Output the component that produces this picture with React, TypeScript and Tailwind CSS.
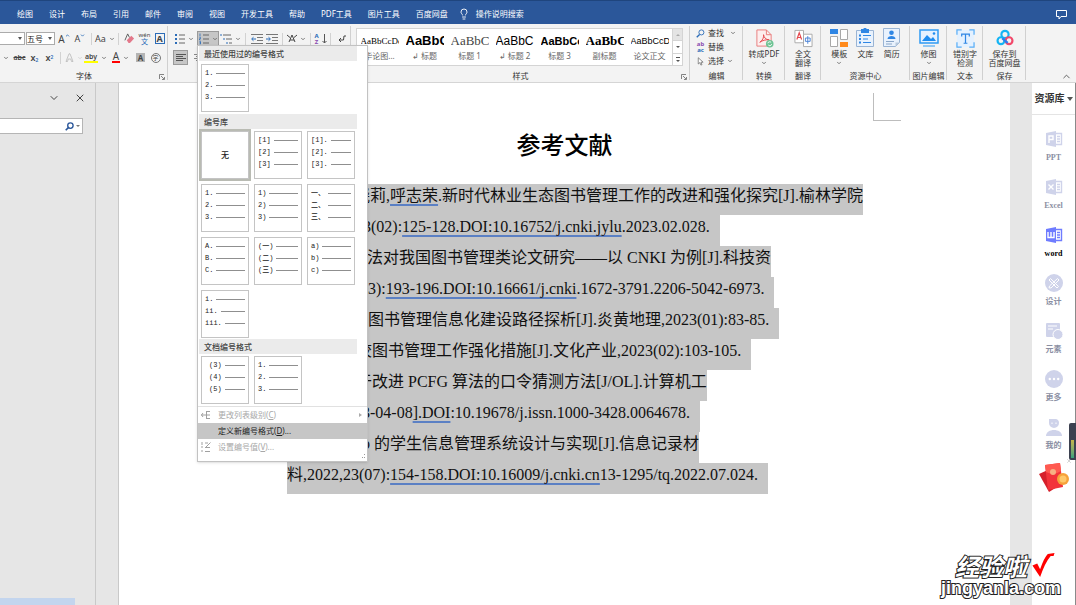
import type { ReactNode } from "react";
import clsx from "clsx";
import { ChevronDown, ChevronUp, Lightbulb, X } from "lucide-react";

const TABS = [
  "绘图",
  "设计",
  "布局",
  "引用",
  "邮件",
  "审阅",
  "视图",
  "开发工具",
  "帮助",
  "PDF工具",
  "图片工具",
  "百度网盘",
];

const STYLES = [
  { sample: "AaBbCcDc", name: "毕论图...", look: "font-['Liberation_Serif'] text-[9px]" },
  { sample: "AaBbC", name: "↲ 标题", look: "font-['Liberation_Sans'] text-[13px] font-bold" },
  { sample: "AaBbC", name: "标题 1", look: "font-['Liberation_Serif'] text-[13px] text-[#444]" },
  { sample: "AaBbC", name: "↲ 标题 2", look: "font-['Liberation_Sans'] text-[12px]" },
  { sample: "AaBbCc", name: "标题 3", look: "font-['Liberation_Sans'] text-[11px] font-bold" },
  { sample: "AaBbC", name: "副标题", look: "font-['Liberation_Serif'] text-[13px] font-bold" },
  { sample: "AaBbCcD", name: "论文正文", look: "font-['Liberation_Sans'] text-[9px]" },
];

type Part = string | { mark: string };
type Line = { pad: string; parts: Part[]; end?: boolean };

const LINES: Line[] = [
  {
    pad: "pl-[67px]",
    parts: ["晓莉,", { mark: "呼志荣" }, ".新时代林业生态图书管理工作的改进和强化探究[J].榆林学院"],
  },
  {
    pad: "pl-[76px]",
    parts: ["3(02):", { mark: "125-128.DOI:10.16752/j.cnki.jylu" }, ".2023.02.028."],
    end: true,
  },
  { pad: "pl-[64px]", parts: ["量法对我国图书管理类论文研究——以 CNKI 为例[J].科技资"] },
  {
    pad: "pl-[73px]",
    parts: ["03):", { mark: "193-196.DOI:10.16661/j.cnki" }, ".1672-3791.2206-5042-6973."],
    end: true,
  },
  { pad: "pl-[81px]", parts: ["图书管理信息化建设路径探析[J].炎黄地理,2023(01):83-85."], end: true },
  { pad: "pl-[69px]", parts: ["校图书管理工作强化措施[J].文化产业,2023(02):103-105."], end: true },
  { pad: "pl-[69px]", parts: ["于改进 PCFG 算法的口令猜测方法[J/OL].计算机工"] },
  {
    pad: "pl-[75px]",
    parts: ["3-04-08", { mark: "].DOI" }, ":10.19678/j.issn.1000-3428.0064678."],
    end: true,
  },
  { pad: "pl-[75px]", parts: ["b 的学生信息管理系统设计与实现[J].信息记录材"] },
  {
    pad: "pl-0",
    parts: ["料,2022,23(07):", { mark: "154-158.DOI:10.16009/j.cnki.cn" }, "13-1295/tq.2022.07.024."],
    end: true,
  },
];

const LIBRARY = [
  ["[1]", "[2]", "[3]"],
  ["[1].", "[2].", "[3]."],
  ["1.", "2.", "3."],
  ["1)", "2)", "3)"],
  ["一、", "二、", "三、"],
  ["A.", "B.", "C."],
  ["(一)", "(二)", "(三)"],
  ["a)", "b)", "c)"],
  ["i.", "ii.", "iii."],
];

function Caret() {
  return <ChevronDown className="h-[6px] w-[6px] shrink-0 text-[#555]" strokeWidth={3} />;
}

function Sep() {
  return <span className="mx-[3px] h-3 w-px shrink-0 bg-[#d2d2d2]" />;
}

function Tool({ label, w = "w-[15px]", on, children }: { label: string; w?: string; on?: boolean; children: ReactNode }) {
  return (
    <button
      type="button"
      aria-label={label}
      className={clsx(
        "flex h-[15px] shrink-0 items-center justify-center gap-[3px] leading-none",
        w,
        on && "border border-[#9a9a9a] bg-[#c6c6c6]"
      )}
    >
      {children}
    </button>
  );
}

function Group({ label, w, launcher, children }: { label: string; w: string; launcher?: boolean; children?: ReactNode }) {
  return (
    <section className={clsx("relative flex shrink-0 flex-col", w)}>
      <div className="h-[46px]">{children}</div>
      <h2 className="text-center text-[8px] leading-3 whitespace-nowrap text-[#333]">{label}</h2>
      {launcher && (
        <svg viewBox="0 0 6 6" className="absolute right-[3px] bottom-[2px] h-[6px] w-[6px]" fill="none" stroke="#666">
          <path d="M.5 5V.5H5M2 2l3 3M5.5 3v2.5H3" strokeWidth=".8" />
        </svg>
      )}
      <span className="absolute top-[2px] right-0 bottom-[2px] w-px bg-[#d0d0d0]" />
    </section>
  );
}

function BigButton({ icon, lines, caret }: { icon: ReactNode; lines: string[]; caret?: boolean }) {
  return (
    <button type="button" className="flex flex-1 flex-col items-center pt-[4px] text-[8px] leading-[9px] whitespace-nowrap text-[#333]">
      <span className="mb-[1px] flex h-5 items-center">{icon}</span>
      {lines.map((l) => (
        <span key={l}>{l}</span>
      ))}
      {caret && (
        <span className="flex h-[9px] items-center">
          <Caret />
        </span>
      )}
    </button>
  );
}

function BulletIcon({ kind }: { kind: "dot" | "num" | "multi" }) {
  if (kind === "multi") {
    return (
      <svg viewBox="0 0 12 12" className="h-[12px] w-[12px]" fill="none">
        <path d="M1 1v2M4 5v2M7 9v2" stroke="#2b6cb8" />
        <path d="M3 2h8M6 6h6M9 10h3" stroke="#666" />
      </svg>
    );
  }
  return (
    <svg viewBox="0 0 10 12" className="h-[12px] w-[10px]" fill="none">
      <path d="M4 2h6M4 6h6M4 10h6" stroke="#666" />
      {kind === "dot" ? (
        <path d="M0 1h2v2H0zM0 5h2v2H0zM0 9h2v2H0z" fill="#2b6cb8" />
      ) : (
        <path d="M1 .5v3M.5 4.5h1v1.2H.5V7h1M.5 8.5h1V11h-1M.5 9.7h1" stroke="#2b6cb8" strokeWidth=".8" />
      )}
    </svg>
  );
}

function IndentIcon({ flip }: { flip?: boolean }) {
  return (
    <svg viewBox="0 0 12 10" className="h-[10px] w-[12px]" fill="none">
      <path d="M0 .5h12M6 3.5h6M6 6.5h6M0 9.5h12" stroke="#777" />
      <path d={flip ? "M0 5h4M2.5 3.2L4.4 5 2.5 6.8" : "M1 5h4M2.5 3.2L.6 5l1.9 1.8"} stroke="#2b6cb8" />
    </svg>
  );
}

function FontGroup() {
  return (
    <Group label="字体" w="w-[168px]" launcher>
      <div className="flex items-center pt-[5px] text-[#444]">
        <div className="flex h-[19px] items-center">
          <button type="button" aria-label="字体名称" className="flex h-[13px] w-[25px] items-center justify-end border border-l-0 border-[#ababab] bg-white pr-[2px]">
            <svg viewBox="0 0 4 3" className="h-[3px] w-[4px]" fill="#555">
              <path d="M0 0h4L2 3z" />
            </svg>
          </button>
          <label className="relative ml-[1px] flex h-[13px] w-[29px] items-center border border-[#ababab] bg-white">
            <select aria-label="字号" className="w-full appearance-none text-[8px] leading-[11px] text-[#222] outline-none">
              <option>五号</option>
            </select>
            <svg viewBox="0 0 4 3" className="pointer-events-none absolute right-[2px] h-[3px] w-[4px]" fill="#555">
              <path d="M0 0h4L2 3z" />
            </svg>
          </label>
          <Tool label="增大字号" w="ml-[1px] w-4">
            <span className="text-[10px]">A</span>
            <ChevronUp className="mb-[6px] -ml-[3px] h-[5px] w-[5px] text-[#2b6cb8]" strokeWidth={4} />
          </Tool>
          <Tool label="减小字号" w="w-4">
            <span className="text-[9px]">A</span>
            <ChevronDown className="mb-[6px] -ml-[3px] h-[5px] w-[5px] text-[#2b6cb8]" strokeWidth={4} />
          </Tool>
          <Sep />
          <Tool label="更改大小写" w="w-[20px]">
            <span className="text-[9px]">Aa</span>
            <Caret />
          </Tool>
          <Sep />
          <Tool label="清除格式">
            <svg viewBox="0 0 12 12" className="h-[11px] w-[11px]">
              <path d="M1 8L4 1l2 4" fill="none" stroke="#555" />
              <path d="M3 8l5-5 3 3-4.5 5H5z" fill="#e3788a" />
            </svg>
          </Tool>
          <Tool label="拼音指南">
            <span className="flex flex-col items-center">
              <span className="text-[6px] leading-[5px]">wén</span>
              <span className="text-[7px] leading-[7px] text-[#2b6cb8]">文</span>
            </span>
          </Tool>
          <Tool label="字符边框">
            <span className="flex h-[11px] w-[10px] items-center justify-center border border-[#2b6cb8] text-[9px] font-bold">A</span>
          </Tool>
        </div>
      </div>
      <div className="flex h-[19px] items-center text-[#444]">
        <Tool label="下划线选项" w="w-[12px]">
          <Caret />
        </Tool>
        <Tool label="删除线">
          <s className="text-[7px] font-semibold">abc</s>
        </Tool>
        <Tool label="下标">
          <span className="text-[9px] font-semibold">
            x<sub className="text-[5px] text-[#2b6cb8]">2</sub>
          </span>
        </Tool>
        <Tool label="上标">
          <span className="text-[9px] font-semibold">
            x<sup className="text-[5px] text-[#2b6cb8]">2</sup>
          </span>
        </Tool>
        <Sep />
        <Tool label="文本效果" w="w-[19px]">
          <svg viewBox="0 0 9 9" className="h-[9px] w-[9px]" fill="none" stroke="#b9b9b9">
            <path d="M1 8.5L4 .8h1l3 7.7H6.5L5.8 6H3.2l-.7 2.5z" strokeWidth=".8" />
          </svg>
          <ChevronDown className="h-[6px] w-[6px] text-[#bbb]" />
        </Tool>
        <Tool label="突出显示" w="w-[25px]">
          <span className="border-b-2 border-[#ffff00] px-px text-[7px] leading-[8px] font-semibold">aby</span>
          <Caret />
        </Tool>
        <Tool label="字体颜色" w="w-[25px]">
          <span className="border-b-2 border-[#ff0000] px-px text-[10px] leading-[9px]">A</span>
          <Caret />
        </Tool>
        <Tool label="字符底纹">
          <span className="flex h-[9px] w-[9px] items-center justify-center bg-[#b4b4b4] text-[8px] font-bold">A</span>
        </Tool>
        <Tool label="带圈字符">
          <span className="flex h-[10px] w-[10px] items-center justify-center rounded-full border border-[#777] text-[6px]">字</span>
        </Tool>
      </div>
    </Group>
  );
}

function ParagraphGroup() {
  return (
    <Group label="" w="w-[183px]">
      <div className="pt-[5px]">
        <div className="flex h-[19px] items-center pl-[4px]">
          <Tool label="项目符号" w="w-[25px]">
            <BulletIcon kind="dot" />
            <Caret />
          </Tool>
          <Tool label="编号" w="w-[22px]" on>
            <BulletIcon kind="num" />
            <Caret />
          </Tool>
          <Tool label="多级列表" w="w-[23px]">
            <BulletIcon kind="multi" />
            <Caret />
          </Tool>
          <Sep />
          <Tool label="减少缩进量">
            <IndentIcon />
          </Tool>
          <Tool label="增加缩进量">
            <IndentIcon flip />
          </Tool>
          <Sep />
          <Tool label="中文版式" w="w-[21px]">
            <svg viewBox="0 0 10 9" className="h-[9px] w-[10px]" fill="none" stroke="#444">
              <path d="M2 8l3-7 3 7M3 6h4M0 1l3 2.5M10 1L7 3.5" />
            </svg>
            <Caret />
          </Tool>
          <Sep />
          <Tool label="排序" w="w-[13px]">
            <span className="flex flex-col text-[6px] leading-[6px] font-bold">
              <span className="text-[#2b6cb8]">A</span>
              <span className="text-[#8a4bb0]">Z</span>
            </span>
            <svg viewBox="0 0 5 10" className="h-[10px] w-[5px]" fill="none" stroke="#555">
              <path d="M2.5 0v9M.5 7l2 2 2-2" />
            </svg>
          </Tool>
          <Sep />
          <Tool label="显示编辑标记">
            <svg viewBox="0 0 8 8" className="h-[8px] w-[8px]" fill="none" stroke="#444">
              <path d="M7 0v2M6 1l-.5 4H1M3 3L1 5l2 2" />
            </svg>
          </Tool>
        </div>
        <div className="flex h-[19px] items-center gap-[3px] pl-[5px]">
          <Tool label="左对齐" on>
            <svg viewBox="0 0 10 10" className="h-[10px] w-[10px]" stroke="#555">
              <path d="M0 1.5h10M0 3.5h7M0 5.5h10M0 7.5h7" />
            </svg>
          </Tool>
          <Tool label="居中">
            <svg viewBox="0 0 10 10" className="h-[10px] w-[10px]" stroke="#888">
              <path d="M0 1.5h10M2 3.5h6M0 5.5h10M2 7.5h6" />
            </svg>
          </Tool>
        </div>
      </div>
    </Group>
  );
}

function StylesGroup() {
  return (
    <Group label="样式" w="w-[339px]" launcher>
      <div className="pt-[4px] pl-[5px]">
        <div className="flex h-[38px] w-[327px] border border-[#d4d4d4] bg-white">
          {STYLES.map((s) => (
            <button key={s.name} type="button" className="flex w-[45px] shrink-0 flex-col items-center pt-[4px] text-black">
              <span className={clsx("h-4 w-[38px] overflow-hidden text-left leading-4 whitespace-nowrap", s.look)}>{s.sample}</span>
              <span className="mt-[2px] text-[8px] leading-[10px] whitespace-nowrap text-[#666]">{s.name}</span>
            </button>
          ))}
          <div className="flex flex-1 flex-col divide-y divide-[#d4d4d4] border-l border-[#d4d4d4]">
            <button type="button" aria-label="上一行" className="flex flex-1 items-center justify-center bg-[#e4e4e4]">
              <svg viewBox="0 0 4 2" className="h-[2px] w-[4px]" fill="#aaa">
                <path d="M0 2h4L2 0z" />
              </svg>
            </button>
            <button type="button" aria-label="下一行" className="flex flex-1 items-center justify-center">
              <svg viewBox="0 0 4 2" className="h-[2px] w-[4px]" fill="#555">
                <path d="M0 0h4L2 2z" />
              </svg>
            </button>
            <button type="button" aria-label="其他" className="flex flex-1 items-center justify-center">
              <svg viewBox="0 0 4 5" className="h-[5px] w-[4px]" fill="#555">
                <path d="M0 0h4v1H0zM0 3h4L2 5z" />
              </svg>
            </button>
          </div>
        </div>
      </div>
    </Group>
  );
}

function EditGroup() {
  return (
    <Group label="编辑" w="w-[53px]">
      <div className="flex flex-col pt-[2px] pl-[6px] text-[8px] leading-[14px] text-[#333]">
        <button type="button" className="flex h-[14px] items-center gap-[3px]">
          <svg viewBox="0 0 10 10" className="h-[9px] w-[9px]" fill="none" stroke="#2b6cb8">
            <circle cx="6" cy="3.8" r="2.8" />
            <path d="M4 6L.8 9.2" strokeWidth="1.5" />
          </svg>
          查找
          <span className="ml-[3px]">
            <Caret />
          </span>
        </button>
        <button type="button" className="flex h-[14px] items-center gap-[3px]">
          <span className="flex w-[9px] flex-col text-[6px] leading-[6px] font-bold">
            <span className="text-[#8a4bb0]">ab</span>
            <span className="text-[#2b6cb8]">ac</span>
          </span>
          替换
        </button>
        <button type="button" className="flex h-[14px] items-center gap-[3px]">
          <svg viewBox="0 0 9 10" className="h-[9px] w-[9px]" fill="#fff" stroke="#666">
            <path d="M2 .8v7l1.8-1.6L5 9l1.2-.6L5 5.800h2.400z" strokeWidth=".8" />
          </svg>
          选择
          <Caret />
        </button>
      </div>
    </Group>
  );
}

const pdfIcon = (
  <svg viewBox="0 0 20 20" className="h-[19px] w-[19px]" fill="none">
    <path d="M2 1h10l5 5v12H2z" fill="#fdeeee" stroke="#e87b7b" />
    <path d="M12 1v5h5" stroke="#e87b7b" />
    <path d="M5 14c3-2 4.500-5 4-8 .5 3 2 5 6 5.500C11 11 8 12 5 14z" stroke="#e5484d" />
    <circle cx="15.5" cy="15.5" r="4" fill="#6fc495" />
    <path d="M13.500 15a2 2 0 013.500-.8M17.500 16a2 2 0 01-3.500.8" stroke="#fff" />
  </svg>
);

const translateIcon = (
  <svg viewBox="0 0 20 20" className="h-[19px] w-[19px]" fill="none">
    <path d="M1 1.5h9v13H1z" fill="#fff" stroke="#aaa" />
    <path d="M10 5.5h9v13h-9z" fill="#fff" stroke="#aaa" />
    <path d="M3 11l2.5-7L8 11M3.800 9h3.400" stroke="#e5484d" strokeWidth="1.200" />
    <path d="M14.5 7.5v8M12 9.5h5v3.500h-5z" stroke="#4b83d6" />
  </svg>
);

const templateIcon = (
  <svg viewBox="0 0 20 20" className="h-[20px] w-[20px]" fill="#fff">
    <path d="M1 1h8v5H1z" fill="#2f86e4" />
    <path d="M1.5 8.5h7v10h-7zM11.5 1.5h7v10h-7z" stroke="#a8a8a8" />
    <path d="M11 14h8v5h-8z" fill="#ff8a1c" />
  </svg>
);

const libraryIcon = (
  <svg viewBox="0 0 20 20" className="h-[20px] w-[20px]" fill="none">
    <path d="M1.5 2.5h17v16h-17z" fill="#e9f2fd" stroke="#9ab4d4" />
    <path d="M6 1h2.5a1.5 1.5 0 013 0H14v4H6z" fill="#2f86e4" />
    <path d="M4 7.5h2M4 11h2M4 14.5h2" stroke="#2f86e4" strokeWidth="2" />
    <path d="M8 7.5h8M8 11h5M8 14.5h8" stroke="#2f86e4" />
  </svg>
);

const resumeIcon = (
  <svg viewBox="0 0 20 20" className="h-[20px] w-[20px]" fill="none">
    <path d="M1.5.5h16v14l-4 4h-12z" fill="#e9f2fd" stroke="#9ab4d4" />
    <path d="M17.5 14.5h-4v4z" fill="#b8c9de" />
    <circle cx="9.5" cy="4.8" r="2.3" fill="#2f86e4" />
    <path d="M5.5 11c0-4 8-4 8 0z" fill="#2f86e4" />
    <path d="M4 13.5h8M4 16h6" stroke="#8aa6c8" />
  </svg>
);

const retouchIcon = (
  <svg viewBox="0 0 20 20" className="h-[20px] w-[20px]" fill="none">
    <path d="M1 2h18v13H1z" fill="#e4f1ff" stroke="#2f9bf4" strokeWidth="1.5" />
    <path d="M3 13l5-6 4 4 2-2 3 4z" fill="#1d8cf0" />
    <circle cx="15" cy="5.5" r="1.3" fill="#1d8cf0" />
    <path d="M4 18h12" stroke="#2f9bf4" />
  </svg>
);

const typoIcon = (
  <svg viewBox="0 0 20 20" className="h-[19px] w-[19px]" fill="none">
    <rect x="1" y="1" width="18" height="18" rx="2" fill="#e4f1ff" />
    <path d="M1 6V1h5M14 1h5v5M19 14v5h-5M6 19H1v-5" stroke="#58aef8" strokeWidth="1.3" />
    <path d="M6 8V5.500h8V8M10 5.500V15M8 15h4" stroke="#2f86e4" strokeWidth="1.3" />
  </svg>
);

const netdiskIcon = (
  <svg viewBox="0 0 20 20" className="h-[18px] w-[18px]" fill="none" strokeWidth="2.4">
    <circle cx="10" cy="6" r="4" stroke="#14b4f4" />
    <circle cx="5.5" cy="13" r="3.8" stroke="#14b4f4" />
    <circle cx="14.5" cy="13" r="3.8" stroke="#f2486a" />
    <path d="M7 10.5l6 5" stroke="#2a7df0" />
  </svg>
);

function Ribbon() {
  return (
    <div className="flex h-[59px] border-b border-[#d5d5d5] bg-[#f3f3f3]">
      <FontGroup />
      <ParagraphGroup />
      <StylesGroup />
      <EditGroup />
      <Group label="转换" w="w-[42px]">
        <div className="flex">
          <BigButton icon={pdfIcon} lines={["转成PDF"]} caret />
        </div>
      </Group>
      <Group label="翻译" w="w-[36px]">
        <div className="flex">
          <BigButton icon={translateIcon} lines={["全文", "翻译"]} />
        </div>
      </Group>
      <Group label="资源中心" w="w-[89px]">
        <div className="flex px-[5px]">
          <BigButton icon={templateIcon} lines={["模板"]} caret />
          <BigButton icon={libraryIcon} lines={["文库"]} />
          <BigButton icon={resumeIcon} lines={["简历"]} />
        </div>
      </Group>
      <Group label="图片编辑" w="w-[37px]">
        <div className="flex">
          <BigButton icon={retouchIcon} lines={["修图"]} caret />
        </div>
      </Group>
      <Group label="文本" w="w-[36px]">
        <div className="flex">
          <BigButton icon={typoIcon} lines={["错别字", "检测"]} />
        </div>
      </Group>
      <Group label="保存" w="w-[43px]">
        <div className="flex">
          <BigButton icon={netdiskIcon} lines={["保存到", "百度网盘"]} />
        </div>
      </Group>
      <div className="flex flex-1 items-end justify-end pr-[4px]">
        <button type="button" aria-label="折叠功能区">
          <ChevronUp className="h-[11px] w-[11px] text-[#555]" />
        </button>
      </div>
    </div>
  );
}

function FormatCell({ items, indent }: { items: string[]; indent?: boolean }) {
  return (
    <button
      type="button"
      className={clsx("flex h-12 w-12 flex-col border border-[#c4c4c4] bg-white pt-[2px] pr-[3px]", indent ? "pl-[7px]" : "pl-[3px]")}
    >
      {items.map((t) => (
        <span key={t} className="flex h-3 w-full items-center gap-[3px] font-['Liberation_Mono','Noto_Sans_CJK_SC',monospace] text-[7px] leading-3 font-medium text-[#222]">
          <span className="min-w-[7px] text-left whitespace-nowrap">{t}</span>
          <span className="h-px flex-1 bg-[#8f8f8f]" />
        </span>
      ))}
    </button>
  );
}

function MenuHeading({ children }: { children: ReactNode }) {
  return <h3 className="mr-[10px] ml-[1px] h-[15px] bg-[#ebebeb] pl-[5px] text-[8px] leading-[15px] font-medium text-[#444]">{children}</h3>;
}

function NumberingMenu() {
  return (
    <div className="absolute top-[45px] left-[197px] z-10 w-[171px] border border-[#c2c2c2] bg-white shadow-sm">
      <MenuHeading>最近使用过的编号格式</MenuHeading>
      <div className="px-[3px] pt-[3px] pb-[2px]">
        <FormatCell items={["1.", "2.", "3."]} />
      </div>
      <MenuHeading>编号库</MenuHeading>
      <div className="flex flex-wrap gap-[5px] px-[3px] pt-[2px] pb-[1px]">
        <button type="button" className="h-12 w-12 border border-[#c4c4c4] bg-white text-[8px] font-medium text-[#222] outline-2 outline-[#b9bbb3]">
          无
        </button>
        {LIBRARY.map((items) => (
          <FormatCell key={items[0]} items={items} />
        ))}
      </div>
      <MenuHeading>文档编号格式</MenuHeading>
      <div className="flex gap-[5px] px-[3px] pt-[2px] pb-[2px]">
        <FormatCell items={["(3)", "(4)", "(5)"]} indent />
        <FormatCell items={["1.", "2.", "3."]} />
      </div>
      <div className="border-t border-[#e1e1e1] pb-[6px] text-[8px] leading-4 text-[#a8a8a8]">
        <button type="button" disabled className="flex h-4 w-full items-center pr-[5px] pl-[3px]">
          <svg viewBox="0 0 10 8" className="mr-[7px] h-[8px] w-[10px]" fill="none" stroke="#a0a0a0">
            <path d="M0 4h6M2 2L.5 4 2 6M5 .5h4M6 4h3M5 7.500h4M5.500 0v8" />
          </svg>
          <span>
            更改列表级别(<u>C</u>)
          </span>
          <svg viewBox="0 0 3 4" className="ml-auto h-[4px] w-[3px]" fill="#aaa">
            <path d="M0 0v4l3-2z" />
          </svg>
        </button>
        <button type="button" className="flex h-4 w-full items-center bg-[#c6c6c6] pl-[20px] text-[#222]">
          <span>
            定义新编号格式(<u>D</u>)...
          </span>
        </button>
        <button type="button" disabled className="flex h-4 w-full items-center pl-[3px]">
          <svg viewBox="0 0 10 10" className="mr-[7px] h-[10px] w-[10px]" fill="none" stroke="#a0a0a0">
            <path d="M1 0v3M1 4v2M1 8v2M4 9.500h5M4 5.500h5M9.500.5L4 6M4 1h3" />
          </svg>
          <span>
            设置编号值(<u>V</u>)...
          </span>
        </button>
      </div>
      <svg viewBox="0 0 5 5" className="absolute right-[2px] bottom-[2px] h-[5px] w-[5px]" fill="#999">
        <path d="M4 0h1v1H4zM2 3h1v1H2zM4 3h1v1H4z" />
      </svg>
    </div>
  );
}

function NavPane() {
  return (
    <aside className="flex w-24 shrink-0 flex-col justify-between border-r border-[#c9c9c9] bg-[#e6e6e6]">
      <div>
        <div className="flex items-center justify-end gap-[14px] pt-[9px] pr-[9px] text-[#444]">
          <button type="button" aria-label="任务窗格选项">
            <ChevronDown className="h-[12px] w-[12px]" strokeWidth={2} />
          </button>
          <button type="button" aria-label="关闭">
            <X className="h-[12px] w-[12px]" strokeWidth={2} />
          </button>
        </div>
        <label className="mt-[14px] mr-[12px] flex h-4 items-center border border-l-0 border-[#b5b5b5] bg-white pr-[2px]">
          <input aria-label="在文档中搜索" className="w-0 flex-1 bg-transparent text-[8px] outline-none" />
          <svg viewBox="0 0 10 10" className="h-[9px] w-[9px]" fill="none" stroke="#2b579a">
            <circle cx="6" cy="4" r="3" strokeWidth="1.5" />
            <path d="M4 6L.8 9.2" strokeWidth="1.8" />
          </svg>
          <svg viewBox="0 0 4 2" className="ml-[2px] h-[2px] w-[4px]" fill="#777">
            <path d="M0 0h4L2 2z" />
          </svg>
        </label>
      </div>
      <div className="h-[7px] w-[75px] bg-[#c3d5ee]" />
    </aside>
  );
}

function DocumentPage() {
  return (
    <main className="min-w-0 flex-1 overflow-hidden border-l border-[#c9c9c9] bg-white">
      <div className="flex justify-end pt-[10px] pr-[109px]">
        <div className="h-7 w-7 border-b border-l border-[#bdbdbd]" />
      </div>
      <h1 className="mt-[7px] text-center font-['Noto_Sans_CJK_SC',sans-serif] text-2xl leading-8 font-medium text-black">参考文献</h1>
      <div className="mt-[24px] pl-[168px] font-['Liberation_Serif','Noto_Sans_CJK_SC',serif] text-base text-[#111]">
        {LINES.map((line, i) => (
          <p
            key={i}
            className={clsx("h-[31px] w-fit bg-[#c6c6c6] leading-6 whitespace-nowrap", line.pad, line.end && "pr-[10px]")}
          >
            {line.parts.map((part, j) =>
              typeof part === "string" ? (
                <span key={j}>{part}</span>
              ) : (
                <span key={j} className="underline decoration-[#5b80c4] decoration-2 underline-offset-3 [text-decoration-skip-ink:none]">
                  {part.mark}
                </span>
              )
            )}
          </p>
        ))}
      </div>
    </main>
  );
}

function OfficeIcon({ glyph, active }: { glyph: string; active?: boolean }) {
  const color = active ? "#6f7cff" : "#cfd3ea";
  return (
    <svg viewBox="0 0 18 18" className="h-[18px] w-[18px]" fill="none">
      <path d="M1 3l10-2v16L1 15z" fill={color} />
      <path d="M11 3.500h5.500v11H11M12 6.500h3M12 9h3M12 11.500h3" stroke={color} strokeWidth="1.4" />
      <path d={glyph} stroke="#fff" strokeWidth="1.4" />
    </svg>
  );
}

const SIDE_ITEMS: { name: string; icon: ReactNode; active?: boolean }[] = [
  { name: "PPT", icon: <OfficeIcon glyph="M4 13V6h4v3.500H4" /> },
  { name: "Excel", icon: <OfficeIcon glyph="M3.500 6.500l5 5M8.500 6.500l-5 5" /> },
  { name: "word", icon: <OfficeIcon glyph="M3 6v5.500h6V6M6 6v5.500" active />, active: true },
  {
    name: "设计",
    icon: (
      <svg viewBox="0 0 18 18" className="h-[18px] w-[18px]" fill="none">
        <circle cx="9" cy="9" r="9" fill="#cfd3ea" />
        <path d="M5.500 4.500l8 8-1.500 1.500-8-8zM12.500 4.500l1.500 1.500-8 8-2-.2.500-1.800z" stroke="#fff" />
      </svg>
    ),
  },
  {
    name: "元素",
    icon: (
      <svg viewBox="0 0 18 18" className="h-[18px] w-[18px]" fill="#cfd3ea">
        <rect x="1" y="1" width="14" height="14" rx="1" />
        <path d="M3 4h9M3 7h5" stroke="#fff" />
        <circle cx="13" cy="12.5" r="5" stroke="#fff" />
      </svg>
    ),
  },
  {
    name: "更多",
    icon: (
      <svg viewBox="0 0 18 18" className="h-[18px] w-[18px]" fill="#fff">
        <circle cx="9" cy="9" r="9" fill="#cfd3ea" />
        <circle cx="4.8" cy="9" r="1.2" />
        <circle cx="9" cy="9" r="1.2" />
        <circle cx="13.2" cy="9" r="1.2" />
      </svg>
    ),
  },
  {
    name: "我的",
    icon: (
      <svg viewBox="0 0 18 18" className="h-[18px] w-[18px]" fill="#cfd3ea">
        <path d="M4 1h7a4 4 0 013 4 5 5 0 01-10 0z" />
        <path d="M1 18c0-8 16-8 16 0z" />
        <path d="M7 4.500v1.500M11 4.500v1.500" stroke="#fff" />
      </svg>
    ),
  },
];

function ResourcePanel() {
  return (
    <aside className="relative w-[44px] shrink-0 border-r border-[#8a8a8a] bg-white font-['Liberation_Serif','Noto_Sans_CJK_SC',serif]">
      <button type="button" className="flex h-8 w-full items-center justify-center gap-[2px] border-b border-[#e4e4e4] text-[10px] font-bold whitespace-nowrap text-[#333]">
        资源库
        <svg viewBox="0 0 6 4" className="h-[4px] w-[6px]" fill="#555">
          <path d="M0 0h6L3 4z" />
        </svg>
      </button>
      <nav className="pt-[15px]">
        {SIDE_ITEMS.map((item) => (
          <button
            key={item.name}
            type="button"
            className={clsx(
              "flex h-12 w-full flex-col items-center text-[8px] leading-3 font-bold",
              item.active ? "text-black" : "text-[#8b8fa3]"
            )}
          >
            {item.icon}
            <span className="mt-[4px]">{item.name}</span>
          </button>
        ))}
      </nav>
      <button type="button" aria-label="领取红包" className="absolute top-[379px] left-[6px]">
        <svg viewBox="0 0 32 32" className="h-8 w-8">
          <path d="M1 12l11-5 7 18-8 5z" fill="#d5202b" />
          <path d="M7 3l15-2 3 24-15 3z" fill="#f2333a" />
          <path d="M7 3l15-2 1 8q-7 5-15 1z" fill="#ff5a50" />
          <circle cx="15" cy="10" r="3" fill="#f7b183" />
          <circle cx="25" cy="17" r="6" fill="#f6a23a" />
          <circle cx="25" cy="17" r="3.5" fill="#ffc86a" />
        </svg>
      </button>
      <button type="button" aria-label="关闭红包" className="absolute top-[375px] right-[3px]">
        <X className="h-[6px] w-[6px] text-[#aaa]" />
      </button>
      <div className="absolute top-[340px] -right-px flex h-[37px] w-[7px] items-end rounded-l-[2px] bg-[#3c4150] p-[2px]">
        <span className="h-[18px] w-[3px] bg-gradient-to-b from-[#c4b44a] to-[#35a07a]" />
      </div>
    </aside>
  );
}

function Watermark() {
  return (
    <div className="pointer-events-none absolute right-[15px] bottom-[7px] z-20 flex flex-col items-end font-bold text-white [-webkit-text-stroke:2px_#222] [paint-order:stroke_fill]">
      <div className="flex items-center gap-[4px] pr-[6px]">
        <span className="font-['Noto_Sans_CJK_SC',sans-serif] text-2xl leading-6 italic">经验啦</span>
        <svg viewBox="0 0 24 26" className="h-[25px] w-[24px]">
          <path d="M1 13l5-2 3 6Q13 5 17 1l7-1-1 3h-3Q14 10 9 25z" fill="#ff0000" />
        </svg>
      </div>
      <span className="font-['Liberation_Sans',sans-serif] text-lg leading-5">jingyanla.com</span>
    </div>
  );
}

export default function App() {
  return (
    <div className="relative flex min-h-screen flex-col overflow-hidden bg-[#e6e6e6] font-['Noto_Sans','Noto_Sans_CJK_SC',sans-serif]">
      <header className="flex h-6 items-center border-t border-[#1f457e] bg-[#2b579a] pr-[8px] pl-[17px] text-[8px] leading-none text-white">
        <nav className="flex gap-4 pt-[2px]">
          {TABS.map((t) => (
            <button key={t} type="button" className="whitespace-nowrap">
              {t}
            </button>
          ))}
        </nav>
        <button type="button" className="ml-[10px] flex items-center gap-[6px] pt-[2px] whitespace-nowrap">
          <Lightbulb className="h-[12px] w-[12px]" strokeWidth={1.8} />
          操作说明搜索
        </button>
        <button type="button" aria-label="批注" className="ml-auto pt-[4px]">
          <svg viewBox="0 0 12 10" className="h-[10px] w-[12px]" fill="none" stroke="#fff">
            <path d="M.5.5h10v6H5L3 9V6.500H.5z" />
          </svg>
        </button>
      </header>
      <Ribbon />
      <div className="flex flex-1">
        <NavPane />
        <div className="w-[22px] shrink-0" />
        <DocumentPage />
        <div className="w-[22px] shrink-0" />
        <ResourcePanel />
      </div>
      <NumberingMenu />
      <Watermark />
    </div>
  );
}
